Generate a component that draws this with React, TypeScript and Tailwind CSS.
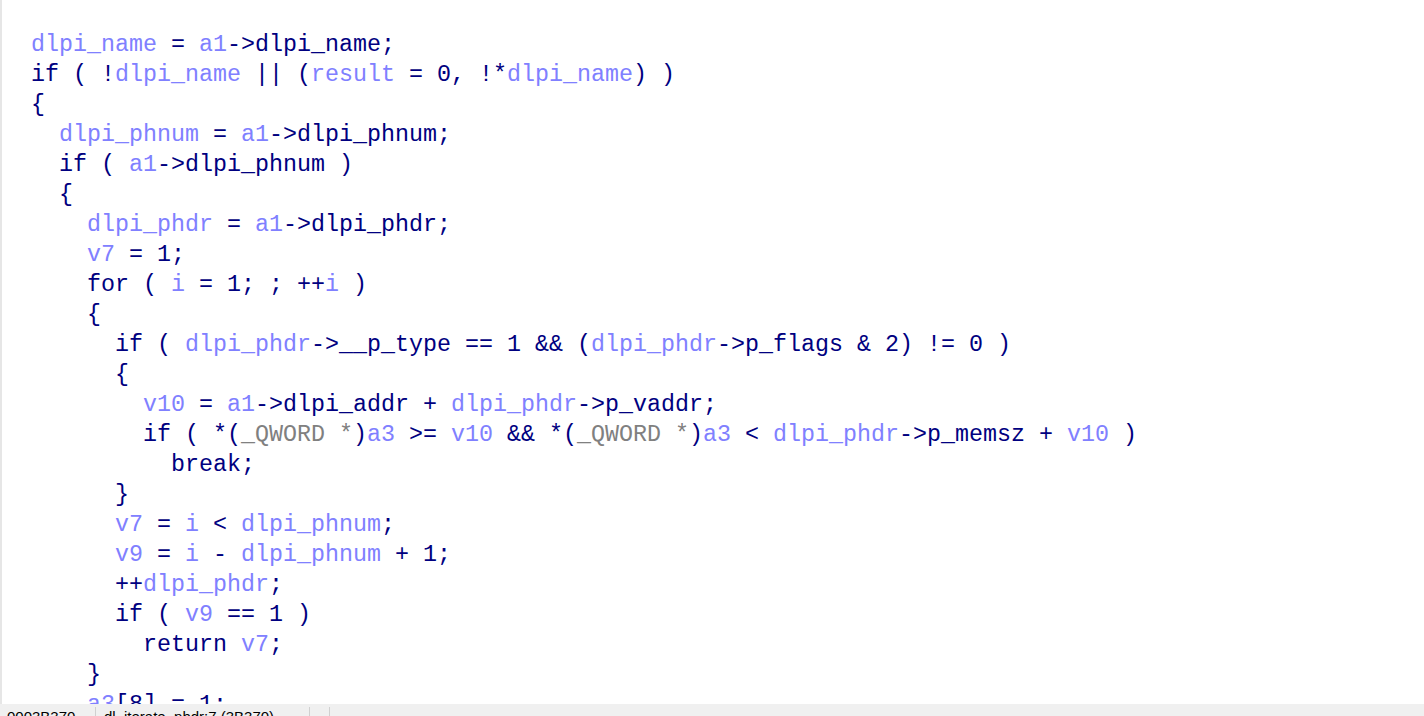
type Kind = "n" | "v" | "g"
type Token = [Kind, string]

const lines: { indent: number; tokens: Token[] }[] = [
  { indent: 0, tokens: [["v", "dlpi_name"], ["n", " = "], ["v", "a1"], ["n", "->dlpi_name;"]] },
  { indent: 0, tokens: [["n", "if ( !"], ["v", "dlpi_name"], ["n", " || ("], ["v", "result"], ["n", " = 0, !*"], ["v", "dlpi_name"], ["n", ") )"]] },
  { indent: 0, tokens: [["n", "{"]] },
  { indent: 2, tokens: [["v", "dlpi_phnum"], ["n", " = "], ["v", "a1"], ["n", "->dlpi_phnum;"]] },
  { indent: 2, tokens: [["n", "if ( "], ["v", "a1"], ["n", "->dlpi_phnum )"]] },
  { indent: 2, tokens: [["n", "{"]] },
  { indent: 4, tokens: [["v", "dlpi_phdr"], ["n", " = "], ["v", "a1"], ["n", "->dlpi_phdr;"]] },
  { indent: 4, tokens: [["v", "v7"], ["n", " = 1;"]] },
  { indent: 4, tokens: [["n", "for ( "], ["v", "i"], ["n", " = 1; ; ++"], ["v", "i"], ["n", " )"]] },
  { indent: 4, tokens: [["n", "{"]] },
  { indent: 6, tokens: [["n", "if ( "], ["v", "dlpi_phdr"], ["n", "->__p_type == 1 && ("], ["v", "dlpi_phdr"], ["n", "->p_flags & 2) != 0 )"]] },
  { indent: 6, tokens: [["n", "{"]] },
  { indent: 8, tokens: [["v", "v10"], ["n", " = "], ["v", "a1"], ["n", "->dlpi_addr + "], ["v", "dlpi_phdr"], ["n", "->p_vaddr;"]] },
  {
    indent: 8,
    tokens: [
      ["n", "if ( *("], ["g", "_QWORD *"], ["n", ")"], ["v", "a3"], ["n", " >= "], ["v", "v10"], ["n", " && *("],
      ["g", "_QWORD *"], ["n", ")"], ["v", "a3"], ["n", " < "], ["v", "dlpi_phdr"], ["n", "->p_memsz + "], ["v", "v10"], ["n", " )"],
    ],
  },
  { indent: 10, tokens: [["n", "break;"]] },
  { indent: 6, tokens: [["n", "}"]] },
  { indent: 6, tokens: [["v", "v7"], ["n", " = "], ["v", "i"], ["n", " < "], ["v", "dlpi_phnum"], ["n", ";"]] },
  { indent: 6, tokens: [["v", "v9"], ["n", " = "], ["v", "i"], ["n", " - "], ["v", "dlpi_phnum"], ["n", " + 1;"]] },
  { indent: 6, tokens: [["n", "++"], ["v", "dlpi_phdr"], ["n", ";"]] },
  { indent: 6, tokens: [["n", "if ( "], ["v", "v9"], ["n", " == 1 )"]] },
  { indent: 8, tokens: [["n", "return "], ["v", "v7"], ["n", ";"]] },
  { indent: 4, tokens: [["n", "}"]] },
  { indent: 4, tokens: [["v", "a3"], ["n", "[8] = 1;"]] },
]

const colors: Record<Kind, string> = {
  n: "text-[#000080]",
  v: "text-[#8080ff]",
  g: "text-[#808080]",
}

export default function App() {
  return (
    <div className="flex h-[716px] w-[1424px] flex-col overflow-hidden bg-white">
      {/* PSEUDOCODE VIEW */}
      <div className="h-[704px] shrink-0 overflow-hidden border-l-2 border-[#e6e6e6] bg-white pl-[29px] pt-[30px]">
        <div className="whitespace-pre font-['Liberation_Mono',monospace] text-[23.33px] leading-[30px]">
          {lines.map((line, i) => (
            <div key={i} className="h-[30px]">
              {" ".repeat(line.indent)}
              {line.tokens.map(([kind, text], j) => (
                <span key={j} className={colors[kind]}>
                  {text}
                </span>
              ))}
            </div>
          ))}
        </div>
      </div>

      {/* STATUS BAR */}
      <div className="flex h-[26px] shrink-0 items-start bg-[#f0f0f0] pt-[3px] font-['Liberation_Sans',sans-serif] text-[15px] leading-[20px] text-[#000000]">
        <div className="w-[96px] border-r border-[#d0d0d0] pl-[7px]">0003B370</div>
        <div className="w-[214px] border-r border-[#d0d0d0] pl-[8px]">dl_iterate_phdr:7 (3B370)</div>
        <div className="w-[20px] border-r border-[#d0d0d0]">&nbsp;</div>
      </div>
    </div>
  )
}
